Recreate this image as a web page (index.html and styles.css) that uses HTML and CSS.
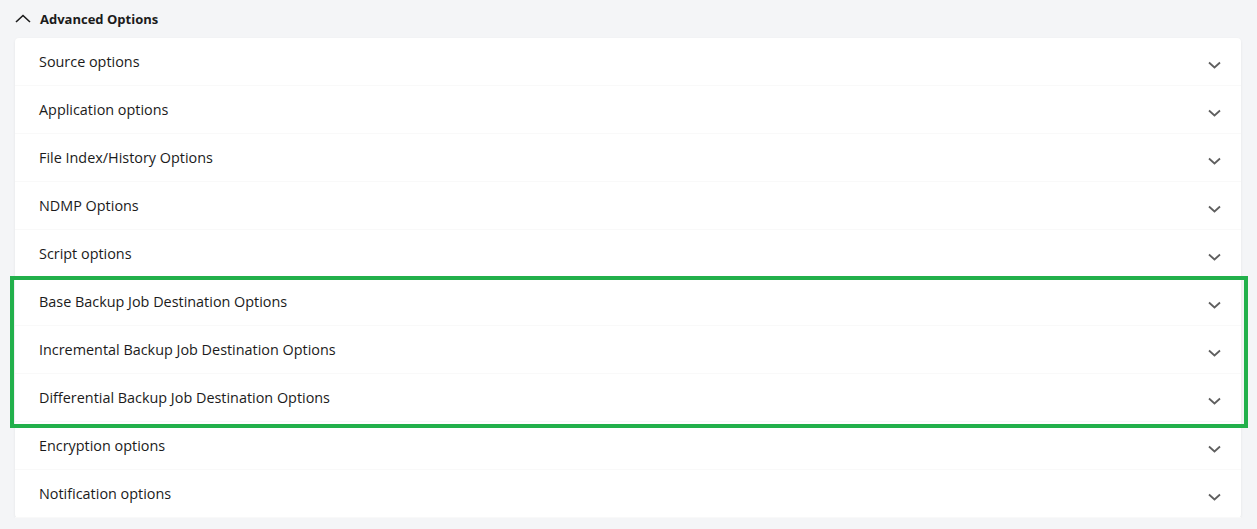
FILE: index.html
```html
<!DOCTYPE html>
<html lang="en">
<head>
    <meta charset="UTF-8">
    <title>Advanced Options</title>
    <link rel="stylesheet" href="styles.css">
</head>
<body>

    <div class="section">
        <div class="sectionHeader">
            <svg class="chevUp" width="16" height="9" viewBox="0 0 16 9"><path d="M1 8 L8 1.5 L15 8" fill="none" stroke="#1b1b1b" stroke-width="1.6"/></svg>
            <span>Advanced Options</span>
        </div>

        <div class="card">
            <div class="row"><span>Source options</span><svg class="chev" width="13" height="8" viewBox="0 0 13 8"><path d="M1 1.5 L6.5 6.5 L12 1.5" fill="none" stroke="#5f5f5f" stroke-width="1.8"/></svg></div>
            <div class="row"><span>Application options</span><svg class="chev" width="13" height="8" viewBox="0 0 13 8"><path d="M1 1.5 L6.5 6.5 L12 1.5" fill="none" stroke="#5f5f5f" stroke-width="1.8"/></svg></div>
            <div class="row"><span>File Index/History Options</span><svg class="chev" width="13" height="8" viewBox="0 0 13 8"><path d="M1 1.5 L6.5 6.5 L12 1.5" fill="none" stroke="#5f5f5f" stroke-width="1.8"/></svg></div>
            <div class="row"><span>NDMP Options</span><svg class="chev" width="13" height="8" viewBox="0 0 13 8"><path d="M1 1.5 L6.5 6.5 L12 1.5" fill="none" stroke="#5f5f5f" stroke-width="1.8"/></svg></div>
            <div class="row"><span>Script options</span><svg class="chev" width="13" height="8" viewBox="0 0 13 8"><path d="M1 1.5 L6.5 6.5 L12 1.5" fill="none" stroke="#5f5f5f" stroke-width="1.8"/></svg></div>

            <div class="highlight">
                <div class="row"><span>Base Backup Job Destination Options</span><svg class="chev" width="13" height="8" viewBox="0 0 13 8"><path d="M1 1.5 L6.5 6.5 L12 1.5" fill="none" stroke="#5f5f5f" stroke-width="1.8"/></svg></div>
                <div class="row"><span>Incremental Backup Job Destination Options</span><svg class="chev" width="13" height="8" viewBox="0 0 13 8"><path d="M1 1.5 L6.5 6.5 L12 1.5" fill="none" stroke="#5f5f5f" stroke-width="1.8"/></svg></div>
                <div class="row"><span>Differential Backup Job Destination Options</span><svg class="chev" width="13" height="8" viewBox="0 0 13 8"><path d="M1 1.5 L6.5 6.5 L12 1.5" fill="none" stroke="#5f5f5f" stroke-width="1.8"/></svg></div>
                <div class="highlightBox"></div>
            </div>

            <div class="row"><span>Encryption options</span><svg class="chev" width="13" height="8" viewBox="0 0 13 8"><path d="M1 1.5 L6.5 6.5 L12 1.5" fill="none" stroke="#5f5f5f" stroke-width="1.8"/></svg></div>
            <div class="row"><span>Notification options</span><svg class="chev" width="13" height="8" viewBox="0 0 13 8"><path d="M1 1.5 L6.5 6.5 L12 1.5" fill="none" stroke="#5f5f5f" stroke-width="1.8"/></svg></div>
        </div>
    </div>

</body>
</html>
```

FILE: styles.css
```css
body{
    margin: 0;
    background-color: #f4f5f7;
    font-family: "Open Sans", "Noto Sans", sans-serif;
    color: #1b1b1b;
}

.section{
    padding: 0 16px 0 15px;
}

.sectionHeader{
    height: 38px;
    display: flex;
    align-items: center;
    gap: 9px;
    font-size: 13px;
    font-weight: 700;
}

.chevUp{
    margin-top: -1px;
}

.card{
    background-color: #ffffff;
    border-radius: 4px;
    box-shadow: 0 1px 3px rgba(0, 0, 0, 0.07);
}

.row{
    height: 48px;
    display: flex;
    align-items: center;
    justify-content: space-between;
    padding: 0 20px 0 24px;
    font-size: 14.4px;
    border-bottom: 1px solid #f9f9f9;
    box-sizing: border-box;
}

.row span{
    margin-top: -1px;
}

.chev{
    margin-top: 7px;
}

.highlight{
    position: relative;
}

/* green frame drawn over the three destination rows */
.highlightBox{
    position: absolute;
    top: -2px;
    bottom: -6px;
    left: -5px;
    right: -7px;
    border: 4px solid #22b04b;
    pointer-events: none;
}
```
